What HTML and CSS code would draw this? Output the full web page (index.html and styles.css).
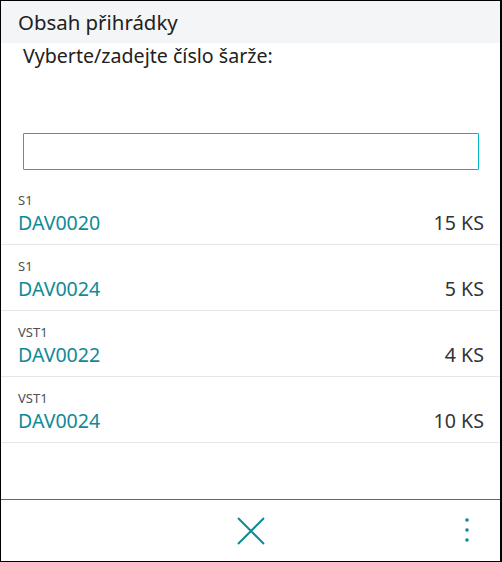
FILE: index.html
```html
<!DOCTYPE html>
<html lang="cs">
<head>
    <meta charset="UTF-8">
    <meta name="viewport" content="width=device-width, initial-scale=1.0">
    <title>Obsah přihrádky</title>
    <link rel="stylesheet" href="styles.css">
</head>
<body>

<div class="dialog">
    <div class="header">Obsah přihrádky</div>
    <p class="prompt">Vyberte/zadejte číslo šarže:</p>
    <div class="search">
        <input type="text" class="search-input">
    </div>

    <ul class="lots">
        <li class="lot">
            <span class="bin">S1</span>
            <div class="lot-line">
                <span class="lot-no">DAV0020</span>
                <span class="qty">15 KS</span>
            </div>
        </li>
        <li class="lot">
            <span class="bin">S1</span>
            <div class="lot-line">
                <span class="lot-no">DAV0024</span>
                <span class="qty">5 KS</span>
            </div>
        </li>
        <li class="lot">
            <span class="bin">VST1</span>
            <div class="lot-line">
                <span class="lot-no">DAV0022</span>
                <span class="qty">4 KS</span>
            </div>
        </li>
        <li class="lot">
            <span class="bin">VST1</span>
            <div class="lot-line">
                <span class="lot-no">DAV0024</span>
                <span class="qty">10 KS</span>
            </div>
        </li>
    </ul>

    <div class="footer">
        <button class="icon-btn close" title="Zavřít">
            <svg width="28" height="28" viewBox="0 0 28 28">
                <path d="M1 1 L27 27 M27 1 L1 27" stroke="#0f8a96" stroke-width="2" fill="none"/>
            </svg>
        </button>
        <button class="icon-btn more" title="Další">
            <svg width="6" height="26" viewBox="0 0 6 26">
                <circle cx="3" cy="3" r="1.8" fill="#0f8a96"/>
                <circle cx="3" cy="13" r="1.8" fill="#0f8a96"/>
                <circle cx="3" cy="23" r="1.8" fill="#0f8a96"/>
            </svg>
        </button>
    </div>
</div>

</body>
</html>
```

FILE: styles.css
```css
* {
    box-sizing: border-box;
    margin: 0;
    padding: 0;
}
body {
    font-family: 'Noto Sans', 'Open Sans', sans-serif;
    color: #212121;
    background: #fff;
}
.dialog {
    width: 502px;
    height: 562px;
    display: flex;
    flex-direction: column;
    border-top: 1px solid #000;
    border-left: 1px solid #000;
    border-right: 2px solid #000;
    border-bottom: 1px solid #000;
}
.header {
    background-color: #f4f5f7;
    height: 42px;
    padding: 8px 0 0 17px;
    font-size: 20.4px;
    line-height: 27px;
}
.prompt {
    padding: 0 0 0 22px;
    font-size: 19.6px;
    line-height: 26px;
}
.search {
    padding: 64px 21px 0 22px;
}
.search-input {
    display: block;
    width: 100%;
    height: 37px;
    border: 1px solid #00b7c3;
    border-radius: 1px;
    outline: none;
    font: inherit;
    padding: 0 8px;
}
.lots {
    list-style: none;
    margin-top: 9px;
    flex: 1;
}
.lot {
    height: 66px;
    padding: 12px 16px 0 17px;
    border-bottom: 1px solid #e6e6e6;
}
.bin {
    display: block;
    font-size: 13px;
    line-height: 18px;
    color: #505050;
}
.lot-line {
    display: flex;
    justify-content: space-between;
    align-items: baseline;
    margin-top: 1px;
}
.lot-no {
    font-size: 19.6px;
    line-height: 26px;
    color: #0f8a96;
}
.qty {
    font-size: 19.6px;
    line-height: 26px;
    color: #333;
}
.footer {
    height: 62px;
    border-top: 1px solid #666;
    position: relative;
    display: flex;
    justify-content: center;
    align-items: center;
}
.icon-btn {
    background: none;
    border: none;
    cursor: pointer;
    display: flex;
}
.more {
    position: absolute;
    right: 30px;
    top: 17px;
}
```
